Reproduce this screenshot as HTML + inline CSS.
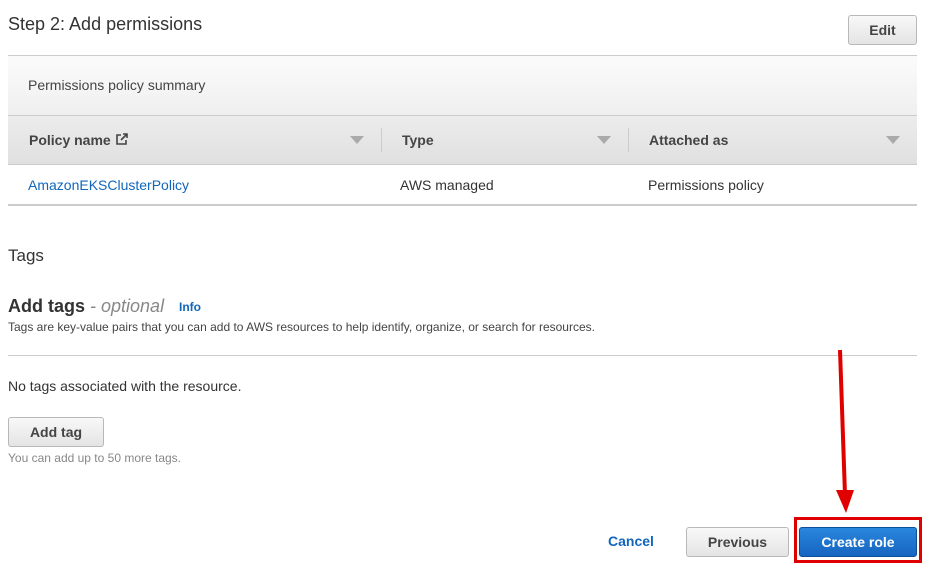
<!DOCTYPE html>
<html><head><meta charset="utf-8"><style>
body{margin:0;width:952px;height:572px;background:#fff;font-family:"Liberation Sans",Arial,sans-serif;color:#16191f;position:relative;overflow:hidden}
.a{position:absolute;white-space:nowrap}
.btn{position:absolute;border:1px solid #b8b8b8;border-radius:3px;background:linear-gradient(#f8f8f8,#e4e4e4);font-weight:bold;font-size:14px;color:#444;text-align:center;box-sizing:border-box}
.tri{position:absolute;width:0;height:0;border-left:7px solid transparent;border-right:7px solid transparent;border-top:8px solid #aaa}
</style></head><body>
<div class="a" style="left:8px;top:14px;font-size:18px;color:#333">Step 2: Add permissions</div>
<div class="btn" style="left:848px;top:15px;width:69px;height:30px;line-height:28px">Edit</div>
<div class="a" style="left:8px;top:55px;width:909px;height:60px;border-top:1px solid #ccc;background:linear-gradient(#fbfbfb,#efefef)"></div>
<div class="a" style="left:28px;top:77px;font-size:14px;color:#444">Permissions policy summary</div>
<div class="a" style="left:8px;top:115px;width:909px;height:48px;border-top:1px solid #ccc;border-bottom:1px solid #ccc;background:linear-gradient(#ececec,#e0e0e0)"></div>
<div class="a" style="left:29px;top:132px;font-size:14px;font-weight:bold;color:#444">Policy name <svg width="14" height="14" viewBox="0 0 14 14" style="vertical-align:-1px"><path d="M6 3H2v9h9V8" fill="none" stroke="#444" stroke-width="1.6"/><path d="M6 8l6-6M8 2h4v4" fill="none" stroke="#444" stroke-width="1.6"/></svg></div>
<div class="tri" style="left:350px;top:136px"></div>
<div class="a" style="left:381px;top:128px;width:1px;height:24px;background:#ccc"></div>
<div class="a" style="left:402px;top:132px;font-size:14px;font-weight:bold;color:#444">Type</div>
<div class="tri" style="left:597px;top:136px"></div>
<div class="a" style="left:628px;top:128px;width:1px;height:24px;background:#ccc"></div>
<div class="a" style="left:649px;top:132px;font-size:14px;font-weight:bold;color:#444">Attached as</div>
<div class="tri" style="left:886px;top:136px"></div>
<div class="a" style="left:28px;top:177px;font-size:14px;color:#1166bb">AmazonEKSClusterPolicy</div>
<div class="a" style="left:400px;top:177px;font-size:14px;color:#333">AWS managed</div>
<div class="a" style="left:648px;top:177px;font-size:14px;color:#333">Permissions policy</div>
<div class="a" style="left:8px;top:204px;width:909px;height:2px;background:#ccc"></div>
<div class="a" style="left:8px;top:246px;font-size:17px;color:#333">Tags</div>
<div class="a" style="left:8px;top:296px;font-size:18px;font-weight:bold;color:#333">Add tags <span style="font-weight:normal;font-style:italic;color:#888">- optional</span></div>
<div class="a" style="left:179px;top:300px;font-size:12px;font-weight:bold;color:#1166bb">Info</div>
<div class="a" style="left:8px;top:320px;font-size:12px;color:#444">Tags are key-value pairs that you can add to AWS resources to help identify, organize, or search for resources.</div>
<div class="a" style="left:8px;top:355px;width:909px;height:1px;background:#ccc"></div>
<div class="a" style="left:8px;top:378px;font-size:14px;color:#333">No tags associated with the resource.</div>
<div class="btn" style="left:8px;top:417px;width:96px;height:30px;line-height:28px">Add tag</div>
<div class="a" style="left:8px;top:451px;font-size:12px;color:#888">You can add up to 50 more tags.</div>
<div class="a" style="left:608px;top:533px;font-size:14px;font-weight:bold;color:#1166bb">Cancel</div>
<div class="btn" style="left:686px;top:527px;width:103px;height:30px;line-height:28px">Previous</div>
<div class="a" style="left:794px;top:517px;width:122px;height:40px;border:3px solid #e00000"></div>
<div class="btn" style="left:799px;top:527px;width:118px;height:30px;line-height:28px;background:linear-gradient(#2a86dd,#1565c0);border-color:#0d4f99;color:#fff">Create role</div>
<svg class="a" style="left:0;top:0" width="952" height="572"><line x1="840" y1="350" x2="845" y2="495" stroke="#e00000" stroke-width="4"/><polygon points="836,490 854,490 846,513" fill="#e00000"/></svg>
</body></html>
